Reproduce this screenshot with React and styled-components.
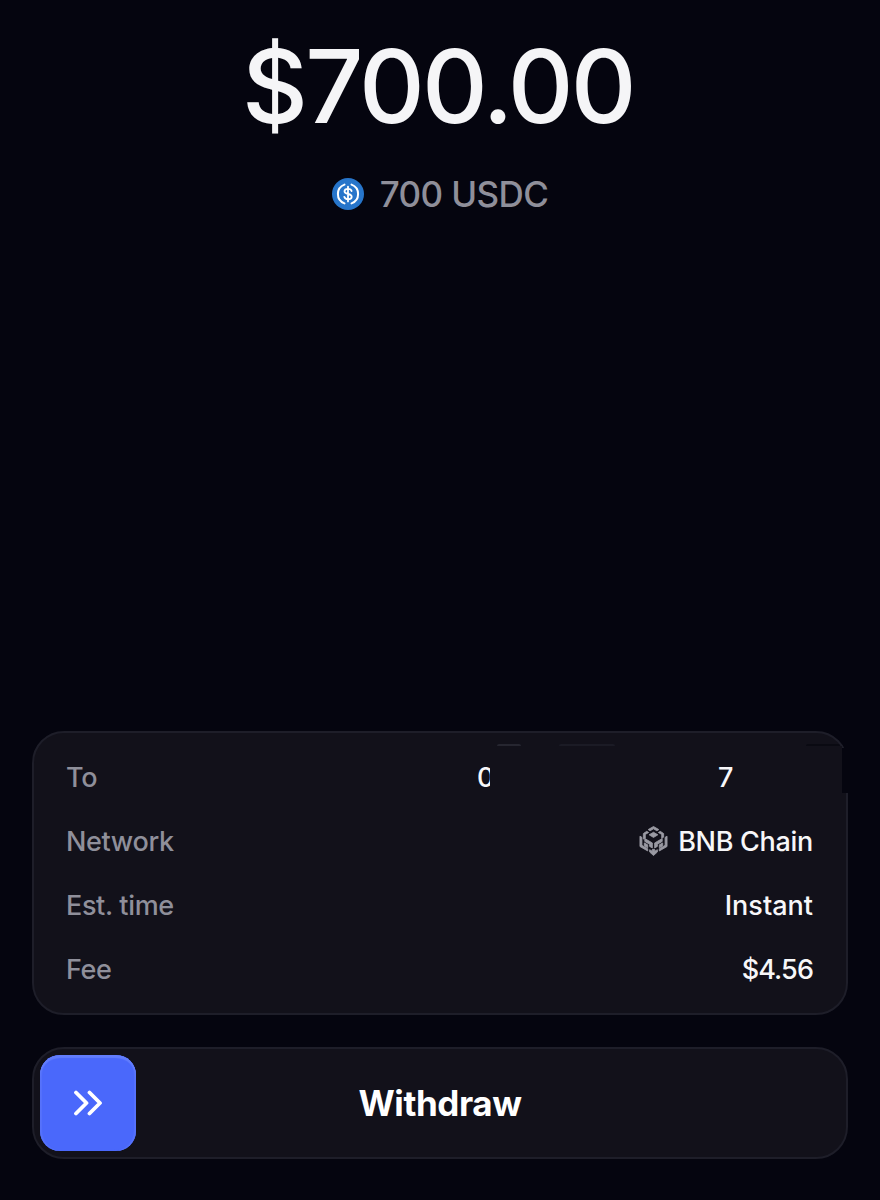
import React from 'react';
import styled, { createGlobalStyle } from 'styled-components';

const GlobalStyle = createGlobalStyle`
  html, body {
    margin: 0;
    padding: 0;
    background: #05050f;
  }
  body {
    font-family: Inter, "Liberation Sans", sans-serif;
    -webkit-font-smoothing: antialiased;
  }
`;

const Page = styled.div`
  box-sizing: border-box;
  width: 880px;
  height: 1200px;
  background: #05050f;
  display: flex;
  flex-direction: column;
  padding: 32px 32px 41px;
`;

const Hero = styled.div`
  display: flex;
  flex-direction: column;
  align-items: center;
  flex: 1;
`;

const Amount = styled.div`
  color: #f5f5f7;
  font-size: 102px;
  line-height: 108px;
  font-weight: 500;
  letter-spacing: -2.8px;
  margin-right: 4px;
`;

const TokenRow = styled.div`
  display: flex;
  align-items: center;
  gap: 16px;
  margin-top: 32px;
  color: #8f8f9a;
  font-size: 35px;
  line-height: 44px;
  font-weight: 500;
  letter-spacing: -0.6px;
`;

const DetailsCard = styled.div`
  position: relative;
  box-sizing: border-box;
  height: 284px;
  background: #12111a;
  border: 2px solid #1e1e29;
  border-radius: 32px;
  padding: 12px 33px 12px 32px;
  display: flex;
  flex-direction: column;
  justify-content: center;
`;

const Row = styled.div`
  height: 64px;
  display: flex;
  align-items: center;
  justify-content: space-between;
`;

const Label = styled.span`
  color: #8f8f9a;
  font-size: 27px;
  font-weight: 500;
  letter-spacing: -0.35px;
`;

const Value = styled.span`
  display: flex;
  align-items: center;
  gap: 10px;
  color: #f7f7f9;
  font-size: 27px;
  font-weight: 500;
  letter-spacing: ${p => p.$tracking ?? -0.3}px;
`;

const AddressValue = styled(Value)`
  position: relative;
  width: 256px;
  margin-right: 80px;
  justify-content: space-between;
  gap: 0;
`;

const AddressEnd = styled.span`
  position: relative;
  z-index: 2;
`;

// patch that hides the middle of the address
const Redaction = styled.div`
  position: absolute;
  left: 456px;
  top: 13px;
  width: 352px;
  height: 48px;
  background: #12111a;
  z-index: 1;
`;

// the patch bites out the card's right border
const BorderGap = styled.div`
  position: absolute;
  right: -3px;
  top: 15px;
  width: 7px;
  height: 45px;
  background: #05050f;
  z-index: 1;
`;

const Smudge = styled.div`
  position: absolute;
  left: ${p => p.$left}px;
  top: 11px;
  width: ${p => p.$width}px;
  height: 2px;
  background: ${p => p.$color};
  border-radius: 2px 2px 0 0;
  filter: blur(0.6px);
  z-index: 1;
`;

const SwipeTrack = styled.div`
  position: relative;
  box-sizing: border-box;
  height: 112px;
  margin-top: 32px;
  background: #12111a;
  border: 2px solid #1e1e29;
  border-radius: 32px;
  display: flex;
  align-items: center;
  justify-content: center;
  color: #fff;
  font-size: 35px;
  font-weight: 700;
  letter-spacing: -0.4px;
`;

const Handle = styled.div`
  position: absolute;
  left: 6px;
  top: 6px;
  width: 96px;
  height: 96px;
  box-sizing: border-box;
  background: #4a68fb;
  border-radius: 20px;
  box-shadow: inset 0 3px 1px #627dfc, inset 2px 0 1px #5672fb, inset -2px 0 1px #5672fb;
  display: flex;
  align-items: center;
  justify-content: center;
`;

const UsdcIcon = () => (
  <svg width="32" height="32" viewBox="0 0 32 32">
    <circle cx="16" cy="16" r="16" fill="#2775ca" />
    <path d="M12.5 6.600a10 10 0 0 0 0 18.800M19.500 6.600a10 10 0 0 1 0 18.800" fill="none" stroke="#fff" strokeWidth="2" strokeLinecap="round" />
    <path d="M19.600 13c-.3-1.400-1.700-2.200-3.600-2.200-2 0-3.500 1-3.500 2.500 0 3.700 7.200 1.700 7.200 5.400 0 1.500-1.500 2.500-3.700 2.500-2 0-3.400-.9-3.700-2.400M16 8.600v14.800" fill="none" stroke="#fff" strokeWidth="1.800" strokeLinecap="round" />
  </svg>
);

const BnbIcon = () => (
  <svg width="29" height="32" viewBox="0 0 30 32" fill="#9a9aa3" stroke="#9a9aa3" strokeWidth="0.9" strokeLinejoin="round">
    <path d="M15 1l5.500 3.200-2 1.200L15 3.400l-3.500 2-2-1.200z" />
    <path d="M15 7l4.500 2.600L15 12.300l-4.500-2.700z" />
    <path d="M8 6l2 1.200-3.500 2v4L4.500 14V8.300z" />
    <path d="M22 6l-2 1.200 3.500 2v4l2-1.200V8.300z" />
    <path d="M1 11l2 1.200v8.300l6 3.500v2.300L1 21.700z" />
    <path d="M29 11l-2 1.200v8.300l-6 3.500v2.300l8-4.600z" />
    <path d="M6 13.500l7.800 4.500v5.200l-2.800-1.600v-2.200L6 16.500z" />
    <path d="M24 13.500L16.200 18v5.200l2.800-1.600v-2.200l5-2.900z" />
    <path d="M5.500 18l3.500 2v3l-3.500-2z" />
    <path d="M24.500 18L21 20v3l3.500-2z" />
    <path d="M11 25l2.800 1.600v-2l2.400 0v2L19 25v2.400L15 31l-4-3.600z" />
  </svg>
);

const Chevrons = () => (
  <svg width="30" height="26" viewBox="0 0 30 26" fill="none" stroke="#fff" strokeWidth="3.800" strokeLinecap="round" strokeLinejoin="round">
    <path d="M3 2.500l10.500 10.500L3 23.500" />
    <path d="M16.500 2.500L27 13 16.500 23.500" />
  </svg>
);

export default function App() {
  return (
    <Page>
      <GlobalStyle />
      <Hero>
        <Amount>$700.00</Amount>
        <TokenRow>
          <UsdcIcon />
          700 USDC
        </TokenRow>
      </Hero>
      <DetailsCard>
        <Redaction />
        <BorderGap />
        <Smudge $left={463} $width={24} $color="#262630" />
        <Smudge $left={525} $width={56} $color="#1b1b25" />
        <Smudge $left={772} $width={34} $color="#0a0a12" />
        <Row>
          <Label>To</Label>
          <AddressValue>
            <span>0</span>
            <AddressEnd>7</AddressEnd>
          </AddressValue>
        </Row>
        <Row>
          <Label>Network</Label>
          <Value>
            <BnbIcon />
            BNB Chain
          </Value>
        </Row>
        <Row>
          <Label>Est. time</Label>
          <Value $tracking={0}>Instant</Value>
        </Row>
        <Row>
          <Label>Fee</Label>
          <Value $tracking={-0.9}>$4.56</Value>
        </Row>
      </DetailsCard>
      <SwipeTrack>
        <Handle>
          <Chevrons />
        </Handle>
        Withdraw
      </SwipeTrack>
    </Page>
  );
}
